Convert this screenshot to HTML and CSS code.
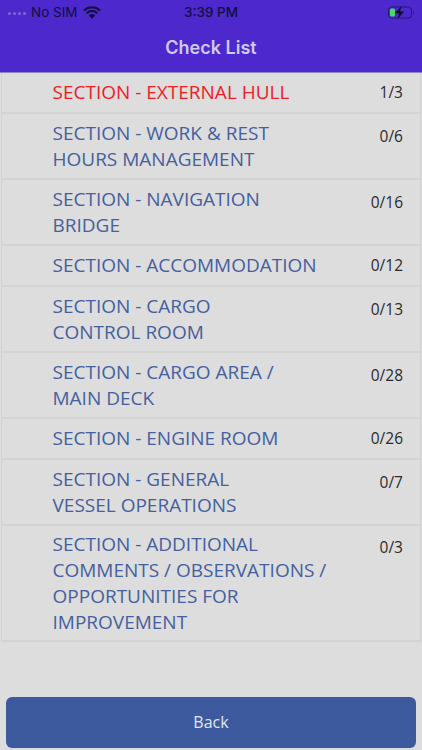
FILE: index.html
```html
<!DOCTYPE html>
<html lang="en">
<head>
    <meta charset="UTF-8">
    <meta name="viewport" content="width=device-width, initial-scale=1.0">
    <title>Check List</title>
    <link rel="stylesheet" href="styles.css">
</head>
<body>
    <div class="topbar">
        <div class="status">
            <div class="status-left">
                <span class="dots"><i></i><i></i><i></i><i></i></span>
                <span>No SIM</span>
                <svg class="wifi" width="18" height="13" viewBox="0 0 18 13">
                    <path d="M9 13 L5.9 9.5 A4.6 4.6 0 0 1 12.1 9.5 Z" fill="#120f3c"/>
                    <path d="M3.6 7.2 A8 8 0 0 1 14.4 7.2" fill="none" stroke="#120f3c" stroke-width="2"/>
                    <path d="M1 4.4 A11.8 11.8 0 0 1 17 4.4" fill="none" stroke="#120f3c" stroke-width="2"/>
                </svg>
            </div>
            <div class="status-time">3:39 PM</div>
            <div class="status-right">
                <svg width="27" height="13" viewBox="0 0 27 13">
                    <rect x="0.5" y="1" width="23" height="11" rx="3" fill="none" stroke="#120f3c" stroke-opacity="0.6"/>
                    <rect x="2" y="2.5" width="5" height="8" rx="1.5" fill="#4cd964"/>
                    <path d="M25 4.5 C26.2 5 26.2 8 25 8.5 Z" fill="#120f3c" fill-opacity="0.6"/>
                    <path d="M13.5 0 L7 7.3 H11 L9.5 13 L16 5.4 H12 Z" fill="#0d0b2e"/>
                </svg>
            </div>
        </div>
        <div class="title">Check List</div>
    </div>

    <div class="list">
        <div class="row single">
            <div class="name active">SECTION - EXTERNAL HULL</div>
            <div class="count">1/3</div>
        </div>
        <div class="row">
            <div class="name">SECTION - WORK &amp; REST<br>HOURS MANAGEMENT</div>
            <div class="count">0/6</div>
        </div>
        <div class="row">
            <div class="name">SECTION - NAVIGATION<br>BRIDGE</div>
            <div class="count">0/16</div>
        </div>
        <div class="row single">
            <div class="name">SECTION - ACCOMMODATION</div>
            <div class="count">0/12</div>
        </div>
        <div class="row">
            <div class="name">SECTION - CARGO<br>CONTROL ROOM</div>
            <div class="count">0/13</div>
        </div>
        <div class="row">
            <div class="name">SECTION - CARGO AREA /<br>MAIN DECK</div>
            <div class="count">0/28</div>
        </div>
        <div class="row single">
            <div class="name">SECTION - ENGINE ROOM</div>
            <div class="count">0/26</div>
        </div>
        <div class="row">
            <div class="name">SECTION - GENERAL<br>VESSEL OPERATIONS</div>
            <div class="count">0/7</div>
        </div>
        <div class="row tall">
            <div class="name">SECTION - ADDITIONAL<br>COMMENTS / OBSERVATIONS /<br>OPPORTUNITIES FOR<br>IMPROVEMENT</div>
            <div class="count">0/3</div>
        </div>
    </div>

    <div class="footer">
        <a href="#" class="back">Back</a>
    </div>
</body>
</html>
```

FILE: styles.css
```css
* {
    box-sizing: border-box;
}
body {
    margin: 0;
    width: 422px;
    height: 750px;
    display: flex;
    flex-direction: column;
    background-color: #dddddd;
    font-family: "Open Sans", sans-serif;
    overflow: hidden;
}
.topbar {
    height: 73px;
    background-color: #4c28cd;
    border-bottom: 1px solid #8f86c9;
}
.status {
    height: 24px;
    display: grid;
    grid-template-columns: 1fr auto 1fr;
    align-items: center;
    color: #120f3c;
    font-family: Inter, sans-serif;
    font-size: 13.5px;
}
.status-left {
    display: flex;
    align-items: center;
    gap: 5px;
    padding-left: 8px;
}
.dots {
    display: flex;
    gap: 2px;
}
.dots i {
    width: 3px;
    height: 3px;
    margin-top: 3px;
    border-radius: 50%;
    background-color: #7d6bd6;
}
.status-time {
    font-weight: 500;
}
.status-right {
    display: flex;
    justify-content: flex-end;
    padding-right: 7px;
}
.title {
    text-align: center;
    color: #cfcbee;
    font-family: Inter, sans-serif;
    font-size: 18px;
    font-weight: 600;
    line-height: 48px;
}
.list {
    flex: 1;
    padding: 0 1px;
}
.row {
    display: flex;
    justify-content: space-between;
    padding: 6px 17px 6px 50.5px;
    border: 1px solid #d3d3d3;
    border-top-width: 0;
    border-bottom-width: 2px;
}
.row.single {
    padding-top: 6px;
    padding-bottom: 7px;
}
.row.tall {
    padding-top: 5px;
    padding-bottom: 5px;
}
.name {
    color: #45609e;
    font-size: 19px;
    line-height: 26px;
}
.name.active {
    color: #ee1c25;
}
.count {
    color: #2b2b2b;
    font-size: 15.5px;
    line-height: 26px;
    padding-top: 3px;
}
.row.single .count {
    padding-top: 0;
}
.footer {
    padding: 0 6px 2px;
}
.back {
    display: block;
    height: 51px;
    line-height: 51px;
    text-align: center;
    color: #e3e7f2;
    background-color: #3e5a9e;
    border-radius: 6px;
    font-size: 16px;
    text-decoration: none;
}
```
